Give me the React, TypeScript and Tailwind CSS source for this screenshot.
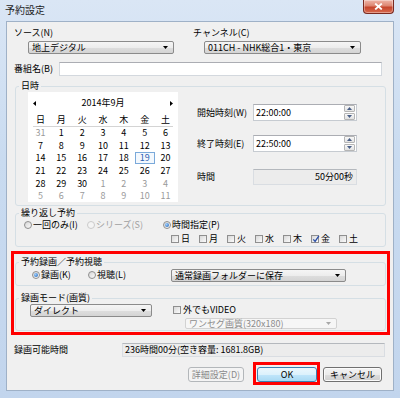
import React from "react";

type ComboProps = { className: string; text: string; disabled?: boolean };

function Combo({ className, text, disabled }: ComboProps) {
  return (
    <div
      className={`flex items-center rounded-[2px] border pl-[3px] pr-[5px] ${
        disabled
          ? "border-[#d2d2d2] bg-[#f6f6f6] text-[#8c8c8c]"
          : "border-[#8b8b8b] bg-[linear-gradient(#f5f5f5,#ededed_50%,#dedede_50%,#d4d4d4)] text-black"
      } ${className}`}
    >
      <span className="flex-1 whitespace-nowrap leading-none">{text}</span>
      <svg width="5" height="3" viewBox="0 0 5 3">
        <path d="M0 0H5L2.5 3Z" fill={disabled ? "#a8a8a8" : "#000"} />
      </svg>
    </div>
  );
}

function Radio({ checked, disabled }: { checked?: boolean; disabled?: boolean }) {
  return (
    <span
      className={`flex h-[8px] w-[8px] shrink-0 items-center justify-center rounded-full border ${
        disabled
          ? "border-[#cacaca] bg-[#f4f4f4]"
          : "border-[#8f8f8f] bg-[linear-gradient(135deg,#d6d6d6,#fafafa)]"
      }`}
    >
      {checked && <span className="h-[4px] w-[4px] rounded-full bg-[radial-gradient(circle_at_35%_35%,#9fd0ff,#1a5fb4)]" />}
    </span>
  );
}

function Check({ checked }: { checked?: boolean }) {
  return (
    <span className="relative flex h-[8px] w-[8px] shrink-0 border border-[#8f8f8f] bg-[linear-gradient(135deg,#d8d8d8,#fbfbfb)]">
      {checked && (
        <svg className="absolute left-[0px] top-[-1px]" width="8" height="8" viewBox="0 0 8 8">
          <path d="M1.3 4.3L3.1 6.4L6.9 0.8" stroke="#2b4fa8" strokeWidth="1.3" fill="none" />
        </svg>
      )}
    </span>
  );
}

function Group({ label, className, children }: { label: string; className: string; children?: React.ReactNode }) {
  return (
    <fieldset className={`rounded-[3px] border border-[#d5dfe5] ${className}`}>
      <legend className="ml-[3px] px-[2px] text-[9px] leading-[12px]">{label}</legend>
      {children}
    </fieldset>
  );
}

function TimeInput({ value }: { value: string }) {
  return (
    <div className="flex h-[17px] w-[104px] items-center border border-[#c6cbd1] border-t-[#abadb3] bg-white pl-[2px] pr-[1px]">
      <span className="flex-1">{value}</span>
      <div className="flex h-[15px] w-[11px] flex-col gap-[1px]">
        <div className="flex flex-1 items-center justify-center rounded-[1px] border border-[#b5b5b5] bg-[linear-gradient(#f8f8f8,#e2e2e2)]">
          <svg width="5" height="3" viewBox="0 0 5 3">
            <path d="M0 3H5L2.5 0Z" fill="#4a5f86" />
          </svg>
        </div>
        <div className="flex flex-1 items-center justify-center rounded-[1px] border border-[#b5b5b5] bg-[linear-gradient(#f8f8f8,#e2e2e2)]">
          <svg width="5" height="3" viewBox="0 0 5 3">
            <path d="M0 0H5L2.5 3Z" fill="#4a5f86" />
          </svg>
        </div>
      </div>
    </div>
  );
}

type Day = { n: number; g?: boolean; sel?: boolean };
const weeks: Day[][] = [
  [{ n: 31, g: true }, { n: 1 }, { n: 2 }, { n: 3 }, { n: 4 }, { n: 5 }, { n: 6 }],
  [{ n: 7 }, { n: 8 }, { n: 9 }, { n: 10 }, { n: 11 }, { n: 12 }, { n: 13 }],
  [{ n: 14 }, { n: 15 }, { n: 16 }, { n: 17 }, { n: 18 }, { n: 19, sel: true }, { n: 20 }],
  [{ n: 21 }, { n: 22 }, { n: 23 }, { n: 24 }, { n: 25 }, { n: 26 }, { n: 27 }],
  [{ n: 28 }, { n: 29 }, { n: 30 }, { n: 1, g: true }, { n: 2, g: true }, { n: 3, g: true }, { n: 4, g: true }],
  [{ n: 5, g: true }, { n: 6, g: true }, { n: 7, g: true }, { n: 8, g: true }, { n: 9, g: true }, { n: 10, g: true }, { n: 11, g: true }],
];
const dow = ["日", "月", "火", "水", "木", "金", "土"];

function Calendar() {
  return (
    <div className="ml-[12px] h-[110px] w-[150px] shrink-0 bg-white px-[2px]">
      <div className="flex h-[22px] items-center justify-between px-[3px]">
        <svg width="3" height="5" viewBox="0 0 3 5">
          <path d="M3 0V5L0 2.5Z" fill="#000" />
        </svg>
        <span>2014年9月</span>
        <svg width="3" height="5" viewBox="0 0 3 5">
          <path d="M0 0V5L3 2.5Z" fill="#000" />
        </svg>
      </div>
      <div className="grid h-[12px] grid-cols-7">
        {dow.map((d) => (
          <div key={d} className="flex items-center justify-center">
            {d}
          </div>
        ))}
      </div>
      <div className="mx-[3px] h-[1px] bg-[#d4d4d4]" />
      {weeks.map((w, i) => (
        <div key={i} className="grid h-[12.6px] grid-cols-7">
          {w.map((d, j) => (
            <div key={j} className="flex items-center justify-center">
              {d.sel ? (
                <span className="flex h-[12px] w-[20px] items-center justify-center border border-[#7aa9da] bg-[#f3f8fd] text-[#2c5fb3]">
                  {d.n}
                </span>
              ) : (
                <span className={d.g ? "text-[#9a9a9a]" : "text-black"}>{d.n}</span>
              )}
            </div>
          ))}
        </div>
      ))}
    </div>
  );
}

export default function App() {
  const input = "border border-[#d3d8de] border-t-[#abadb3] bg-white";
  return (
    <div className="flex h-[398px] w-[400px] flex-col overflow-hidden bg-[linear-gradient(180deg,#dae6f5_0%,#c9dbf0_40%,#c2d5ed_100%)] font-['Noto_Sans_CJK_JP',sans-serif] text-[9px] leading-[12px] text-black">
      <div className="flex h-[21px] shrink-0 items-start">
        <span className="pl-[5px] pt-[4px] text-[10px] leading-[12px] text-[#1e1e1e]">予約設定</span>
        <div className="ml-auto mr-[6px] flex h-[14px] w-[31px] items-center justify-center rounded-b-[4px] border border-t-0 border-[#7a2a20] bg-[linear-gradient(180deg,#efb6a9_0%,#dd8571_45%,#c6452c_55%,#d86a4f_100%)] shadow-[inset_0_0_0_1px_rgba(255,255,255,0.35)]">
          <svg width="9" height="7" viewBox="0 0 9 7">
            <path d="M1.2 0.6L7.8 6.4M7.8 0.6L1.2 6.4" stroke="#fff" strokeWidth="1.9" />
          </svg>
        </div>
      </div>

      <div className="relative mx-[6px] h-[370px] shrink-0 border border-[#9fb1c7] bg-[#f0f0f0]">
        <div className="flex pt-[4px]">
          <div className="w-[186px] pl-[7px]">
            <div className="h-[14px] leading-[14px]">ソース(N)</div>
            <Combo className="ml-[14px] mt-[1px] h-[13px] w-[146px]" text="地上デジタル" />
          </div>
          <div>
            <div className="h-[14px] leading-[14px]">チャンネル(C)</div>
            <Combo className="ml-[11px] mt-[1px] h-[13px] w-[157px]" text="011CH - NHK総合1・東京" />
          </div>
        </div>

        <div className="mt-[8px] flex h-[14px] items-center pl-[7px]">
          <span className="w-[45px]">番組名(B)</span>
          <div className={`h-[14px] w-[323px] ${input}`} />
        </div>

        <Group label="日時" className="ml-[8px] mt-[4px] h-[126px] w-[371px]">
          <div className="flex">
            <Calendar />
            <div className="ml-[19px] flex flex-col">
              <div className="mt-[12px] flex h-[17px] items-center">
                <span className="w-[56px]">開始時刻(W)</span>
                <TimeInput value="22:00:00" />
              </div>
              <div className="mt-[14px] flex h-[17px] items-center">
                <span className="w-[56px]">終了時刻(E)</span>
                <TimeInput value="22:50:00" />
              </div>
              <div className="mt-[17px] flex h-[16px] items-center">
                <span className="w-[56px]">時間</span>
                <div className="flex h-[16px] w-[104px] items-center justify-end border border-[#d9dde2] border-t-[#b4b8bd] bg-[#ececec] pr-[3px]">
                  50分00秒
                </div>
              </div>
            </div>
          </div>
        </Group>

        <Group label="繰り返し予約" className="ml-[8px] mt-[1px] h-[40px] w-[371px]">
          <div className="flex h-[12px] items-center pl-[8px]">
            <div className="flex w-[63px] items-center gap-[1px]">
              <Radio />
              <span>一回のみ(I)</span>
            </div>
            <div className="flex w-[76px] items-center gap-[1px] text-[#a0a0a0]">
              <Radio disabled />
              <span>シリーズ(S)</span>
            </div>
            <div className="flex items-center gap-[1px]">
              <Radio checked />
              <span>時間指定(P)</span>
            </div>
          </div>
          <div className="mt-[2px] flex h-[12px] items-center pl-[155px]">
            {dow.map((d) => (
              <div key={d} className="flex w-[28px] items-center gap-[2px]">
                <Check checked={d === "金"} />
                <span>{d}</span>
              </div>
            ))}
          </div>
        </Group>

        <Group label="予約録画／予約視聴" className="ml-[8px] mt-[9px] h-[30px] w-[371px]">
          <div className="flex h-[14px] items-center pl-[16px]">
            <div className="flex w-[56px] items-center gap-[1px]">
              <Radio checked />
              <span>録画(K)</span>
            </div>
            <div className="flex w-[83px] items-center gap-[1px]">
              <Radio />
              <span>視聴(L)</span>
            </div>
            <Combo className="h-[13px] w-[175px]" text="通常録画フォルダーに保存" />
          </div>
        </Group>

        <Group label="録画モード(画質)" className="ml-[8px] mt-[6px] h-[39px] w-[371px]">
          <div className="flex pl-[14px]">
            <Combo className="h-[13px] w-[122px]" text="ダイレクト" />
            <div className="ml-[21px] flex flex-col">
              <div className="flex h-[12px] items-center gap-[2px]">
                <Check />
                <span>外でもVIDEO</span>
              </div>
              <Combo disabled className="ml-[12px] mt-[2px] h-[11px] w-[152px]" text="ワンセグ画質(320x180)" />
            </div>
          </div>
        </Group>

        <div className="mt-[12px] flex h-[14px] items-center pl-[7px]">
          <span className="w-[108px]">録画可能時間</span>
          <div className="flex h-[14px] w-[263px] items-center border border-[#d9dde2] border-t-[#b4b8bd] bg-[#ececec] pl-[2px]">
            236時間00分(空き容量: 1681.8GB)
          </div>
        </div>

        <div className="mt-[10px] flex h-[15px] justify-end pr-[11px]">
          <div className="flex w-[56px] items-center justify-center rounded-[3px] border border-[#b3b7ba] bg-[#f4f4f4] text-[#8a8a8a]">
            詳細設定(D)
          </div>
          <div className="ml-[13px] flex w-[60px] items-center justify-center rounded-[3px] border border-[#3c7fb1] bg-[linear-gradient(#ecf7fd,#dcf1fc_50%,#c1e6fb_50%,#aad9f3)]">
            OK
          </div>
          <div className="ml-[6px] flex w-[59px] items-center justify-center rounded-[3px] border border-[#707070] bg-[linear-gradient(#f3f3f3,#ebebeb_50%,#dddddd_50%,#cfcfcf)] shadow-[inset_0_0_0_1px_#fbfbfb]">
            キャンセル
          </div>
        </div>

        <div className="pointer-events-none absolute left-[4px] top-[229px] h-[84px] w-[379px] border-[3px] border-[#ff0000]" />
        <div className="pointer-events-none absolute left-[246px] top-[340px] h-[23px] w-[67px] border-[3px] border-[#ff0000]" />
      </div>
    </div>
  );
}
